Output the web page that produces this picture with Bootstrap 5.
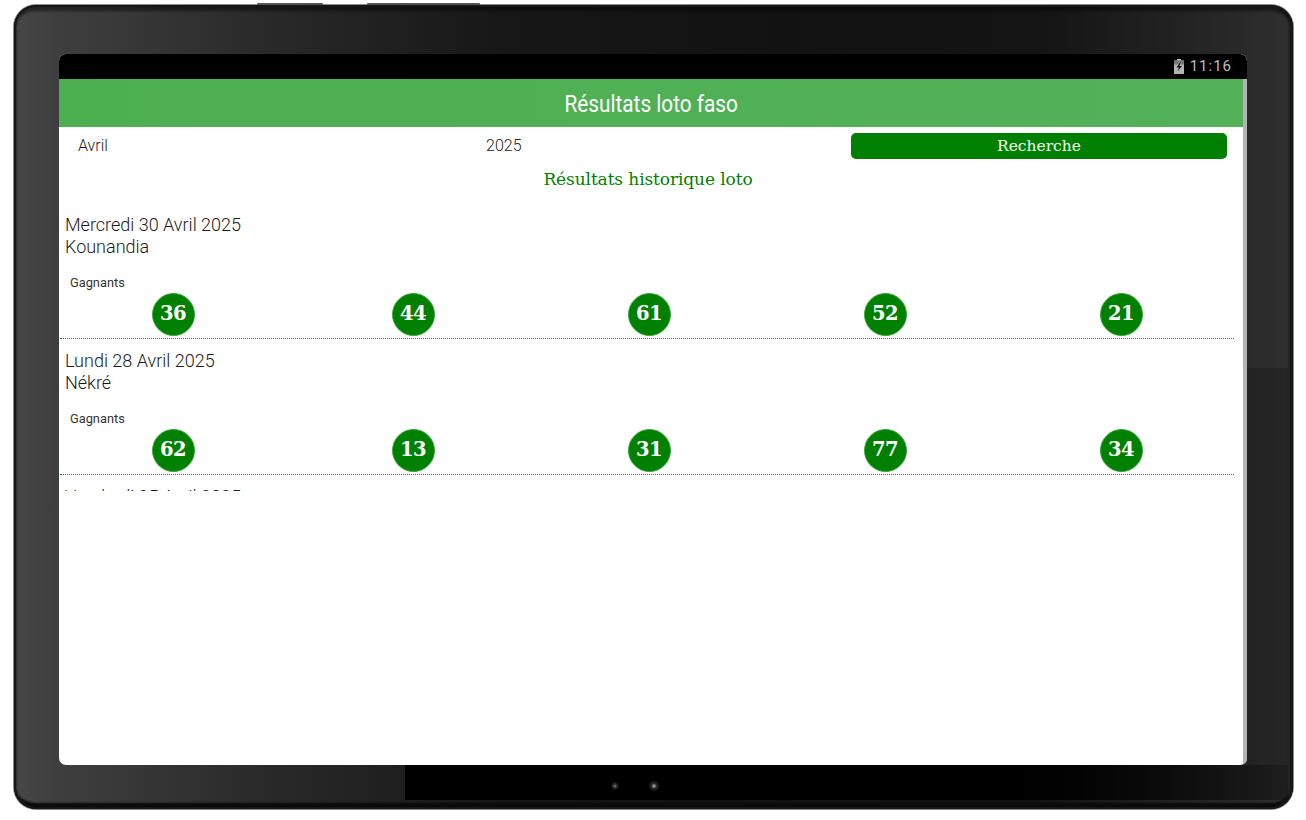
<!DOCTYPE html>
<html lang="fr">
<head>
<meta charset="utf-8">
<title>Résultats loto faso</title>
<link href="https://cdn.jsdelivr.net/npm/bootstrap@5.3.0/dist/css/bootstrap.min.css" rel="stylesheet">
<style>
html,body{height:100%;background:#fff;overflow:hidden}
body{font-family:"Roboto",sans-serif}
.tab-frame{position:relative;width:1279px;height:804px;margin:5px 0 0 14px;padding:49px 46px 44px 45px;border-radius:22px;
  background:linear-gradient(90deg,#484748 0,#403f40 3%,#2a292a 20%,#171718 38%,#121213 60%,#141415 80%,#2a292a 96%,#303030 100%);
  box-shadow:0 0 0 1px #8a8a8a,inset 0 0 0 2px #161616,inset 3px 0 2px #2a2a2a,inset 0 9px 3px -3px rgba(0,0,0,.45),inset -4px 0 2px #1a1a1a,inset 0 -9px 2px -3px #0a0a0a}
.side-btn{position:absolute;top:-2px;height:2px;background:#555;border-radius:1px 1px 0 0}
.side-btn.one{left:243px;width:66px}
.side-btn.two{left:353px;width:113px}
.chin{position:absolute;left:391px;right:5px;bottom:9px;height:35px;background:linear-gradient(90deg,#000 0,#000 70%,rgba(0,0,0,.35) 100%)}
.right-lower{position:absolute;right:5px;width:41px;top:363px;bottom:44px;background:rgba(0,0,0,.18)}
.cap{position:absolute}
.cap.a{left:597px;top:777px;width:8px;height:8px;border-radius:50%;background:radial-gradient(circle,#888 0,#333 30%,#000 80%)}
.cap.b{left:635px;top:776px;width:10px;height:10px;border-radius:50%;background:radial-gradient(circle,#bbb 0,#666 22%,#111 45%,#222 60%,#000 85%)}
.tab-screen{position:relative;height:711px;background:#fff;border-radius:7px;overflow:hidden}
.stat-bar{height:25px;background:#000;color:#bdbdbd;font-size:15px;letter-spacing:1px;padding-right:15px;gap:5px}
.stat-bar svg{width:12px;height:15px}
.app-body{height:686px;border-right:4px solid #b4b2b4}
.app-head{height:48px;background:linear-gradient(90deg,#4caf50,#53b159);color:#fff;font-size:24px;line-height:50px;text-align:center}
.app-head span{display:inline-block;transform:scaleX(.865)}
.search-row{height:36px;padding-top:6px;font-weight:300;font-size:16px;color:#222}
.pick-month{width:427px;padding-left:19px;line-height:26px}
.pick-year{width:365px;line-height:26px}
.go-btn{width:376px;height:26px;padding:0;line-height:22px;border-radius:5px;background:#008000;border:0;color:#f4fff4;font-family:"DejaVu Serif",serif;font-size:15.5px}
.go-btn:hover{background:#008000;color:#f4fff4}
.hist-title{height:34px;line-height:33px;text-align:center;color:#008000;font-family:"DejaVu Serif",serif;font-size:17px;letter-spacing:-.1px;margin-left:-1px;width:1180px}
.draw-list{height:294px;overflow:hidden;padding-top:17px}
.draw{height:136px;padding-left:1px}
.draw-date{padding-left:5px;font-weight:300;font-size:18px;line-height:22px;color:#1a1a1a}
.draw-tag{padding:16px 0 0 10px;font-size:12.8px;line-height:18px;color:#333;height:35px}
.ball-row{display:grid;grid-template-columns:235px repeat(4,236px);height:44px}
.ball-cell{display:flex;justify-content:center}
.ball-cell:first-child{padding-right:9px}
.ball{width:43px;height:43px;border-radius:50%;background:#008000;border:1px solid #37a337;color:#fff;font-family:"DejaVu Serif",serif;font-weight:700;font-size:19.5px;line-height:39px;text-align:center;letter-spacing:-.6px}
.draw-rule{width:1174px;margin-top:1px;border-top:1px dotted #008a80;height:0}
</style>
</head>
<body>
<div class="tab-frame">
  <span class="side-btn one"></span><span class="side-btn two"></span>
  <div class="right-lower"></div><div class="chin"></div>
  <span class="cap a"></span><span class="cap b"></span>
  <div class="tab-screen">
    <div class="stat-bar d-flex align-items-center justify-content-end">
      <svg viewBox="0 0 12 15"><path d="M4 0h4v1.500h3v13.500H1V1.500h3z" fill="#b4b4b4"/><path d="M1 1.500h10v4H1z" fill="#777"/><path d="M7.500 3 3.500 8.500h2.500L4.500 12.500l4.500-5.500H6.500z" fill="#111"/></svg>
      <span>11:16</span>
    </div>
    <div class="app-body">
      <div class="app-head"><span>Résultats loto faso</span></div>
      <div class="search-row d-flex">
        <div class="pick-month">Avril</div>
        <div class="pick-year">2025</div>
        <button class="btn go-btn" type="button">Recherche</button>
      </div>
      <div class="hist-title">Résultats historique loto</div>
      <div class="draw-list">
        <div class="draw">
          <div class="draw-date">Mercredi 30 Avril 2025<br>Kounandia</div>
          <div class="draw-tag">Gagnants</div>
          <div class="ball-row">
            <div class="ball-cell"><div class="ball">36</div></div>
            <div class="ball-cell"><div class="ball">44</div></div>
            <div class="ball-cell"><div class="ball">61</div></div>
            <div class="ball-cell"><div class="ball">52</div></div>
            <div class="ball-cell"><div class="ball">21</div></div>
          </div>
          <div class="draw-rule"></div>
        </div>
        <div class="draw">
          <div class="draw-date">Lundi 28 Avril 2025<br>Nékré</div>
          <div class="draw-tag">Gagnants</div>
          <div class="ball-row">
            <div class="ball-cell"><div class="ball">62</div></div>
            <div class="ball-cell"><div class="ball">13</div></div>
            <div class="ball-cell"><div class="ball">31</div></div>
            <div class="ball-cell"><div class="ball">77</div></div>
            <div class="ball-cell"><div class="ball">34</div></div>
          </div>
          <div class="draw-rule"></div>
        </div>
        <div class="draw">
          <div class="draw-date">Vendredi 25 Avril 2025</div>
        </div>
      </div>
    </div>
  </div>
</div>
<script src="https://cdn.jsdelivr.net/npm/bootstrap@5.3.0/dist/js/bootstrap.bundle.min.js"></script>
</body>
</html>
